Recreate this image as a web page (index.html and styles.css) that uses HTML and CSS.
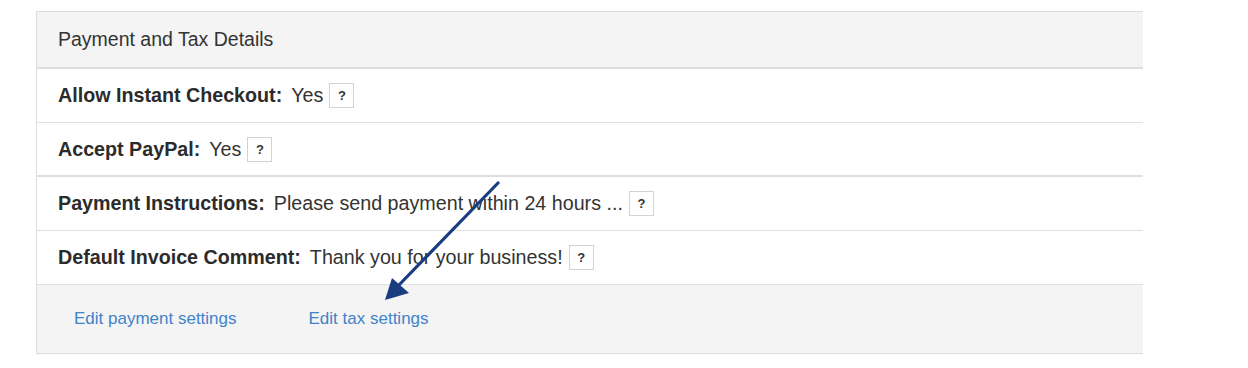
FILE: index.html
```html
<!DOCTYPE html>
<html lang="en">
<head>
    <meta charset="UTF-8">
    <title>Payment and Tax Details</title>
    <link rel="stylesheet" href="styles.css">
</head>
<body>
    <div class="panel">
        <div class="panel-head">Payment and Tax Details</div>
        <div class="row">
            <span class="label">Allow Instant Checkout:</span>
            <span class="value">Yes</span>
            <span class="help">?</span>
        </div>
        <div class="row row-thick">
            <span class="label">Accept PayPal:</span>
            <span class="value">Yes</span>
            <span class="help">?</span>
        </div>
        <div class="row">
            <span class="label">Payment Instructions:</span>
            <span class="value">Please send payment within 24 hours ...</span>
            <span class="help">?</span>
        </div>
        <div class="row">
            <span class="label">Default Invoice Comment:</span>
            <span class="value">Thank you for your business!</span>
            <span class="help">?</span>
        </div>
        <div class="panel-foot">
            <a href="#" class="link">Edit payment settings</a>
            <a href="#" class="link">Edit tax settings</a>
        </div>
    </div>

    <!-- pointer arrow drawn over the panel -->
    <svg class="arrow" width="1248" height="368" viewBox="0 0 1248 368">
        <line x1="498" y1="183" x2="398" y2="286" stroke="#1a3d82" stroke-width="3.2" stroke-linecap="round"/>
        <polygon points="385,300 392,278 409,293" fill="#1a3d82"/>
    </svg>
</body>
</html>
```

FILE: styles.css
```css
body {
    margin: 0;
    padding: 11px 0 0 36px;
    background-color: #ffffff;
    font-family: "Liberation Sans", Arial, sans-serif;
    color: #333333;
    position: relative;
    height: 368px;
    box-sizing: border-box;
    overflow: hidden;
}
.panel {
    width: 1106px;
    border: 1px solid #dcdcdc;
    border-right: none;
}
.panel-head {
    height: 55px;
    padding-left: 21px;
    display: flex;
    align-items: center;
    font-size: 19.5px;
    background-color: #f4f4f4;
    border-bottom: 2px solid #dedede;
}
.row {
    height: 53px;
    padding-left: 21px;
    display: flex;
    align-items: center;
    font-size: 19.7px;
    border-bottom: 1px solid #e0e0e0;
}
.row-thick {
    border-bottom: 2px solid #dedede;
    height: 52px;
}
.label {
    font-weight: bold;
    color: #2b2b2b;
}
.value {
    margin-left: 9px;
}
.help {
    margin-left: 6px;
    width: 23px;
    height: 23px;
    border: 1px solid #d2d2d2;
    display: flex;
    align-items: center;
    justify-content: center;
    font-size: 13px;
    font-weight: bold;
    color: #333333;
}
.panel-foot {
    height: 68px;
    padding-left: 37px;
    display: flex;
    align-items: center;
    gap: 72px;
    background-color: #f4f4f4;
}
.link {
    font-size: 17px;
    color: #3f83c9;
    text-decoration: none;
}
.arrow {
    position: absolute;
    left: 0;
    top: 0;
    pointer-events: none;
}
```
